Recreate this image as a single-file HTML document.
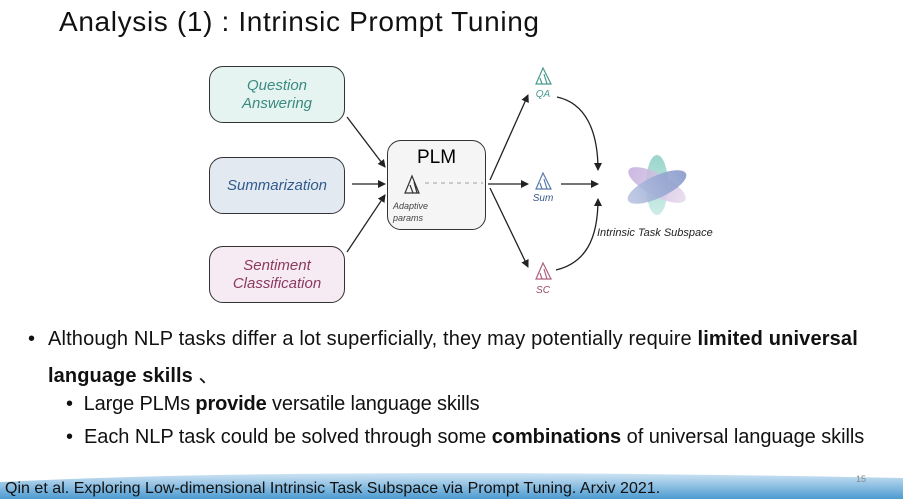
<!DOCTYPE html>
<html><head><meta charset="utf-8"><style>
body{margin:0;width:903px;height:499px;overflow:hidden;background:#fff;font-family:"Liberation Sans",sans-serif;position:relative}
.t{position:absolute;white-space:nowrap}
.b{position:absolute;border:1.5px solid #333;border-radius:14px;display:flex;align-items:center;justify-content:center;text-align:center;font-style:italic;font-size:15px;line-height:18px}
</style></head><body>
<div class="t" style="left:59px;top:6px;font-size:28px;color:#111;letter-spacing:0.65px">Analysis (1) : Intrinsic Prompt Tuning</div>

<div class="b" style="left:209px;top:66px;width:134px;height:55px;background:#e6f4f1;color:#3a8a80">Question<br>Answering</div>
<div class="b" style="left:209px;top:157px;width:134px;height:55px;background:#e3e9f1;color:#2f5a8a">Summarization</div>
<div class="b" style="left:209px;top:246px;width:134px;height:55px;background:#f6eaf3;color:#8a3a5e">Sentiment<br>Classification</div>
<div class="b" style="left:387px;top:140px;width:99px;height:90px;background:#f5f5f5;align-items:flex-start;font-style:normal;font-size:19px;padding-top:8px;box-sizing:border-box">PLM</div>
<div class="t" style="left:393px;top:200px;font-size:9px;font-style:italic;line-height:12px;color:#444">Adaptive<br>params</div>

<svg width="903" height="499" style="position:absolute;left:0;top:0">
<defs>
<marker id="a" markerWidth="8" markerHeight="8" refX="7" refY="4" orient="auto" markerUnits="userSpaceOnUse"><path d="M0,0 L8,4 L0,8z" fill="#222"/></marker>
<linearGradient id="g1" x1="0" y1="0" x2="0" y2="1"><stop offset="0" stop-color="#8fd0c6"/><stop offset="1" stop-color="#c8ebe4"/></linearGradient>
<linearGradient id="g2" x1="0" x2="1"><stop offset="0" stop-color="#b6c3e0"/><stop offset="1" stop-color="#7f92c6"/></linearGradient>
<linearGradient id="g3" x1="0" x2="1"><stop offset="0" stop-color="#c2acdc"/><stop offset="1" stop-color="#e6d8ec"/></linearGradient>
<linearGradient id="ft" x1="0" y1="0" x2="0" y2="1"><stop offset="0" stop-color="#cfe4f4"/><stop offset="1" stop-color="#4d9ad0"/></linearGradient>
</defs>
<g stroke="#222" stroke-width="1.3" fill="none">
<line x1="347" y1="117" x2="385" y2="167" marker-end="url(#a)"/>
<line x1="352" y1="184" x2="385" y2="184" marker-end="url(#a)"/>
<line x1="347" y1="252" x2="385" y2="195" marker-end="url(#a)"/>
<line x1="488" y1="184" x2="528" y2="184" marker-end="url(#a)"/>
<line x1="490" y1="180" x2="528" y2="95" marker-end="url(#a)"/>
<line x1="490" y1="188" x2="528" y2="267" marker-end="url(#a)"/>
<line x1="561" y1="184" x2="598" y2="184" marker-end="url(#a)"/>
<path d="M557,97 C585,103 598,130 598,170" marker-end="url(#a)"/>
<path d="M556,270 C585,263 598,240 598,199" marker-end="url(#a)"/>
</g>
<line x1="425" y1="183" x2="483" y2="183" stroke="#bbb" stroke-width="1.5" stroke-dasharray="4,4"/>
<g fill="none" stroke-width="1.2">
<path d="M412,176 L405,193 L419,193z M410,185 L413,193 M414,182 L417,193" stroke="#333"/>
<path d="M543,68 L536,84 L551,84z M540,78 L542,84 M544,74 L547,84" stroke="#4a9a90"/>
<path d="M543,173 L536,189 L551,189z M540,183 L542,189 M544,179 L547,189" stroke="#5a7aaa"/>
<path d="M543,263 L536,279 L551,279z M540,273 L542,279 M544,269 L547,279" stroke="#b06080"/>
</g>
<text x="543" y="97" font-size="10" font-style="italic" fill="#4a9a90" text-anchor="middle" font-family="Liberation Sans">QA</text>
<text x="543" y="201" font-size="10" font-style="italic" fill="#3a5a8a" text-anchor="middle" font-family="Liberation Sans">Sum</text>
<text x="543" y="293" font-size="10" font-style="italic" fill="#9a4a6a" text-anchor="middle" font-family="Liberation Sans">SC</text>
<ellipse cx="657" cy="185" rx="11" ry="30" fill="url(#g1)" opacity=".9"/>
<ellipse cx="657" cy="185" rx="32" ry="11" transform="rotate(28 657 185)" fill="url(#g3)" opacity=".85"/>
<ellipse cx="657" cy="187" rx="32" ry="11" transform="rotate(-25 657 187)" fill="url(#g2)" opacity=".85"/>
<text x="597" y="236" font-size="11" font-style="italic" fill="#222" font-family="Liberation Sans">Intrinsic Task Subspace</text>
<path d="M0,482 C200,472 500,470 903,478 L903,499 L0,499z" fill="url(#ft)"/>
</svg>

<div class="t" style="left:28px;top:328px;font-size:20px;color:#111">•</div>
<div class="t" style="left:48px;top:328px;font-size:20px;color:#111;letter-spacing:0.15px">Although NLP tasks differ a lot superficially, they may potentially require <b>limited universal</b></div>
<div class="t" style="left:48px;top:359px;font-size:20px;color:#111;letter-spacing:0.1px"><b>language skills</b> 、</div>
<div class="t" style="left:66px;top:393px;font-size:20px;color:#111;letter-spacing:-0.15px">•&nbsp; Large PLMs <b>provide</b> versatile language skills</div>
<div class="t" style="left:66px;top:426px;font-size:20px;color:#111;letter-spacing:-0.05px">•&nbsp; Each NLP task could be solved through some <b>combinations</b> of universal language skills</div>
<div class="t" style="left:5px;top:480px;font-size:16px;color:#111;letter-spacing:0.02px">Qin et al. Exploring Low-dimensional Intrinsic Task Subspace via Prompt Tuning. Arxiv 2021.</div>
<div class="t" style="left:856px;top:474px;font-size:9px;color:#888">15</div>
</body></html>
